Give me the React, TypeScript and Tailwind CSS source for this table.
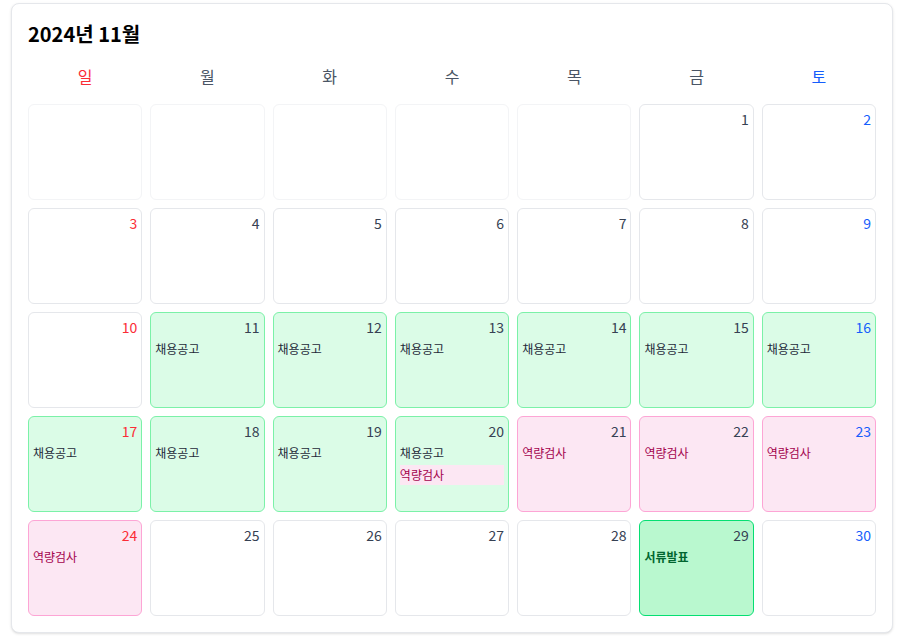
type Ev = { label: string; kind: "job" | "test" | "doc" };

const days = ["일", "월", "화", "수", "목", "금", "토"];

function eventsFor(d: number): Ev[] {
  const out: Ev[] = [];
  if (d >= 11 && d <= 20) out.push({ label: "채용공고", kind: "job" });
  if (d >= 20 && d <= 24) out.push({ label: "역량검사", kind: "test" });
  if (d === 29) out.push({ label: "서류발표", kind: "doc" });
  return out;
}

function Cell({ day, col }: { day: number | null; col: number }) {
  if (day === null) {
    return <div className="h-24 rounded-md border border-gray-100 bg-white" />;
  }
  const evs = eventsFor(day);
  const first = evs[0]?.kind;
  let box = "border-gray-200 bg-white";
  if (first === "job") box = "border-green-300 bg-green-100";
  if (first === "test") box = "border-pink-300 bg-pink-100";
  if (first === "doc") box = "border-green-400 bg-green-200";
  const numColor = col === 0 ? "text-red-500" : col === 6 ? "text-blue-600" : "text-gray-700";

  return (
    <div className={`flex h-24 flex-col rounded-md border p-1 ${box}`}>
      <div className={`text-right text-sm leading-5 ${numColor}`}>{day}</div>
      <div className="mt-0.5 flex flex-col gap-0.5">
        {evs.map((e, i) => {
          let cls = "text-gray-800";
          if (e.kind === "test") cls = first === "test" ? "text-pink-800" : "bg-pink-100 text-pink-800";
          if (e.kind === "doc") cls = "font-bold text-green-800";
          return (
            <div key={i} className={`py-0.5 text-xs leading-4 ${cls}`}>
              {e.label}
            </div>
          );
        })}
      </div>
    </div>
  );
}

export default function App() {
  const cells: (number | null)[] = [null, null, null, null, null];
  for (let d = 1; d <= 30; d++) cells.push(d);

  return (
    <div
      className="min-h-screen bg-white pt-[3px] pl-[11px]"
      style={{ fontFamily: '"Noto Sans CJK KR", "Noto Sans", sans-serif' }}
    >
      <div className="w-[882px] rounded-lg border border-gray-200 bg-white p-4 shadow-sm">
        <h2 className="mb-2 text-xl font-bold leading-7 text-black">2024년 11월</h2>
        <div className="grid grid-cols-7 gap-2">
          {days.map((d, i) => (
            <div
              key={d}
              className={`py-2 text-center text-base leading-6 ${
                i === 0 ? "text-red-500" : i === 6 ? "text-blue-600" : "text-gray-600"
              }`}
            >
              {d}
            </div>
          ))}
          {cells.map((d, i) => (
            <Cell key={i} day={d} col={i % 7} />
          ))}
        </div>
      </div>
    </div>
  );
}
